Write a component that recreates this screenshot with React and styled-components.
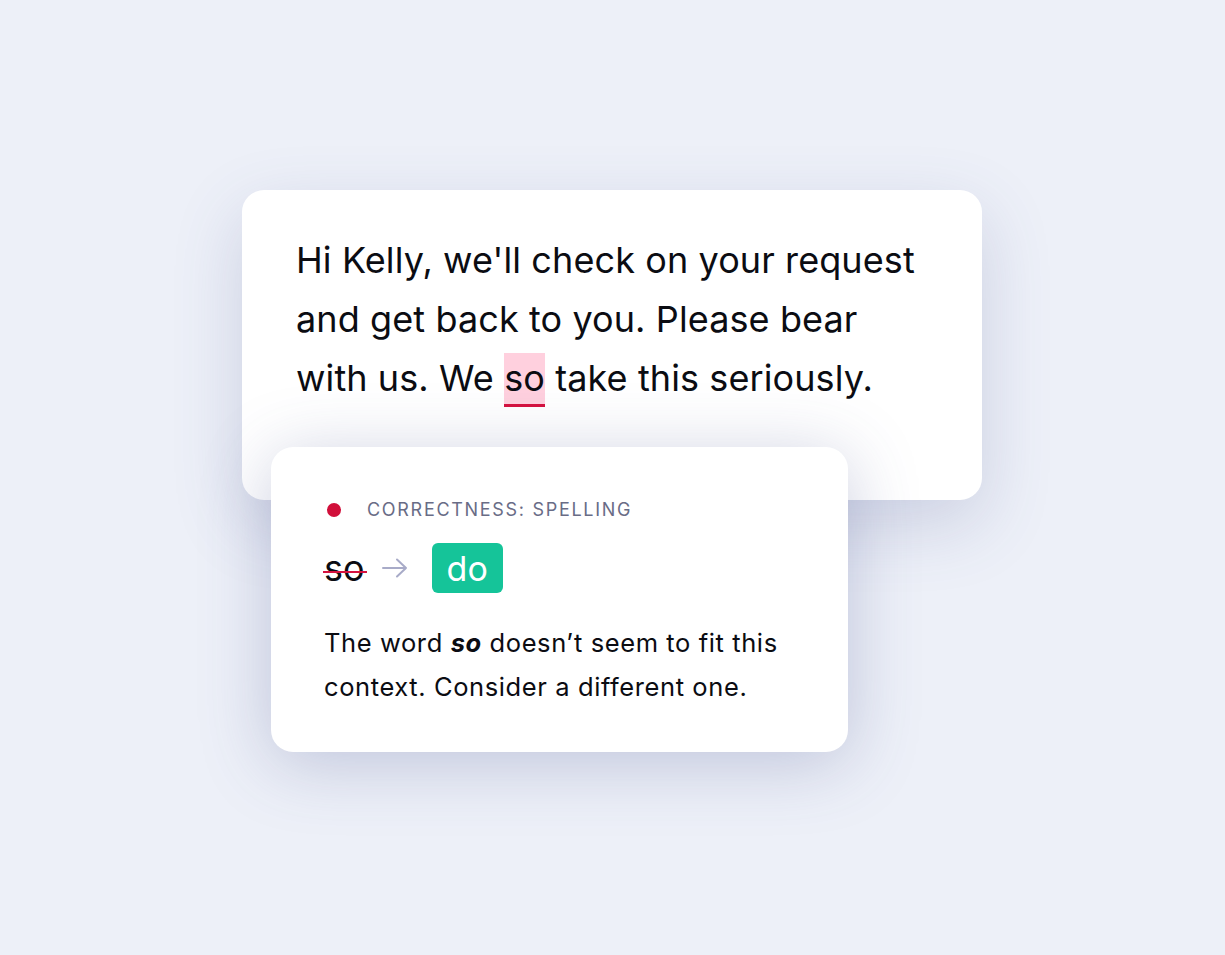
import React from 'react';
import styled, { createGlobalStyle } from 'styled-components';

const GlobalStyle = createGlobalStyle`
  html, body {
    margin: 0;
    padding: 0;
    background: #edf0f8;
  }
  body {
    font-family: Inter, "Noto Sans", sans-serif;
    color: #0b0c12;
  }
`

const Page = styled.div`
  min-height: 955px;
  box-sizing: border-box;
  padding: 190px 0 0 242px;
`

const Stage = styled.div`
  position: relative;
  width: 740px;
`

const MessageCard = styled.div`
  width: 740px;
  height: 310px;
  box-sizing: border-box;
  padding: 41px 50px 0 54px;
  background: #fff;
  border-radius: 22px;
  box-shadow: 0 24px 70px rgba(70, 80, 140, 0.2);
`

const Message = styled.p`
  margin: 0;
  font-size: 36px;
  line-height: 59px;
  letter-spacing: 0.1px;
  color: #0b0c12;
`

const Flagged = styled.span`
  display: inline-block;
  line-height: 51px;
  background: #ffd0de;
  border-bottom: 3px solid #d5123f;
`

const SuggestionCard = styled.div`
  position: absolute;
  left: 29px;
  top: 257px;
  width: 577px;
  height: 305px;
  box-sizing: border-box;
  padding: 52px 53px 0 53px;
  background: #fff;
  border-radius: 22px;
  box-shadow: 0 10px 70px rgba(70, 80, 140, 0.28);
`

const Category = styled.div`
  display: flex;
  align-items: center;
  gap: 26px;
  font-size: 18px;
  letter-spacing: 1.7px;
  color: #696c86;
`

const Dot = styled.span`
  width: 14px;
  height: 14px;
  border-radius: 50%;
  background: #d10f3a;
  margin-left: 3px;
`

const Replacement = styled.div`
  display: flex;
  align-items: center;
  margin-top: 23px;
  height: 50px;
`

const Struck = styled.span`
  position: relative;
  font-size: 36px;
  line-height: 1;
  &::after {
    content: '';
    position: absolute;
    left: -1px;
    right: -2px;
    top: 57%;
    height: 2px;
    background: #d5123f;
  }
`

const Arrow = styled.svg`
  margin: 0 23px 0 16px;
`

const Fix = styled.span`
  display: inline-flex;
  align-items: center;
  justify-content: center;
  height: 50px;
  padding: 0 15px;
  border-radius: 6px;
  background: #15c499;
  color: #fff;
  font-size: 34px;
`

const Explanation = styled.p`
  margin: 28px 0 0 0;
  font-size: 25.5px;
  line-height: 44px;
  letter-spacing: 0.6px;
`

export default function App() {
  return (
    <>
      <GlobalStyle />
      <Page>
        <Stage>
          <MessageCard>
            <Message>
              Hi Kelly, we'll check on your request and get back to you. Please bear
              with us. We <Flagged>so</Flagged> take this seriously.
            </Message>
          </MessageCard>
          <SuggestionCard>
            <Category>
              <Dot />
              CORRECTNESS: SPELLING
            </Category>
            <Replacement>
              <Struck>so</Struck>
              <Arrow width="28" height="22" viewBox="0 0 28 22" fill="none">
                <path
                  d="M2 11H25M16 2.5L25 11L16 19.5"
                  stroke="#a8abc8"
                  strokeWidth="2"
                  strokeLinecap="round"
                  strokeLinejoin="round"
                />
              </Arrow>
              <Fix>do</Fix>
            </Replacement>
            <Explanation>
              The word <b><i>so</i></b> doesn’t seem to fit this context. Consider a
              different one.
            </Explanation>
          </SuggestionCard>
        </Stage>
      </Page>
    </>
  );
}
